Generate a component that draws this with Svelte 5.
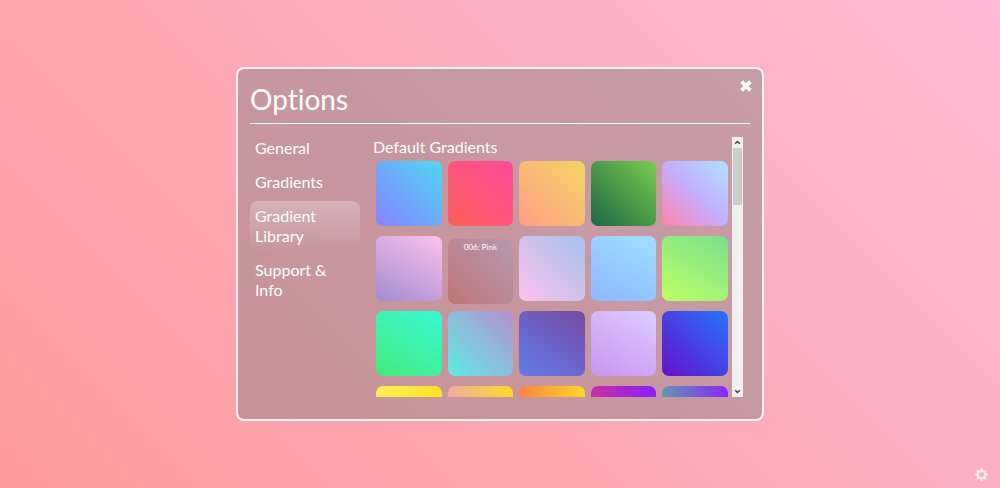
<script>
  const sections = ['General', 'Gradients', 'Gradient Library', 'Support & Info'];
  let active = $state('Gradient Library');
  let open = $state(true);
  let viewport;

  const gradients = [
    { name: 'Blue', css: 'linear-gradient(45deg, #8882ff, #4fd8f2)' },
    { name: 'Red', css: 'linear-gradient(45deg, #ff5f57, #ff4c9f)' },
    { name: 'Sand', css: 'linear-gradient(45deg, #ff9e86, #f4d664)' },
    { name: 'Forest', css: 'linear-gradient(45deg, #1d6844, #7acb4f)' },
    { name: 'Candy', css: 'linear-gradient(45deg, #ff83a8, #c4aeff 50%, #afe3ff)' },
    { name: 'Lavender', css: 'linear-gradient(30deg, #a18cd1, #fbc2eb)' },
    { name: '006: Pink', css: 'linear-gradient(45deg, #be7475, #b59ab3)', hovered: true },
    { name: 'Dawn', css: 'linear-gradient(45deg, #fbc2eb, #a6c1ee)' },
    { name: 'Sky', css: 'linear-gradient(30deg, #8cb6ff, #a1e0ff)' },
    { name: 'Lime', css: 'linear-gradient(30deg, #bdff66, #7ae08c)' },
    { name: 'Mint', css: 'linear-gradient(30deg, #43ea78, #38f9d7)' },
    { name: 'Lagoon', css: 'linear-gradient(45deg, #5eece4, #b58fcf)' },
    { name: 'Indigo', css: 'linear-gradient(35deg, #617cea, #764ba2)' },
    { name: 'Lilac', css: 'linear-gradient(30deg, #c794ef, #dccdff)' },
    { name: 'Ultramarine', css: 'linear-gradient(45deg, #6610cb, #2575fc)' },
    { name: 'Lemon', css: 'linear-gradient(90deg, #fff05a, #ffe125)' },
    { name: 'Peach', css: 'linear-gradient(90deg, #ecae9c, #ffda26)' },
    { name: 'Orange', css: 'linear-gradient(90deg, #ff8346, #ffd724)' },
    { name: 'Magenta', css: 'linear-gradient(90deg, #cb2da3, #8a20fa)' },
    { name: 'Dusk', css: 'linear-gradient(90deg, #6197b0, #8a26fa)' }
  ];
</script>

<main>
  {#if open}
    <section class="panel" aria-labelledby="title">
      <header>
        <h1 id="title">Options</h1>
        <button class="close" aria-label="Close" onclick={() => (open = false)}>
          <svg viewBox="0 0 12 12" width="12" height="12">
            <path d="M3 3 9 9M9 3 3 9" stroke="#fff" stroke-width="3.8" stroke-linecap="square" stroke-linejoin="round" />
          </svg>
        </button>
      </header>
      <div class="body">
        <nav>
          {#each sections as section}
            <button class:active={active === section} onclick={() => (active = section)}>{section}</button>
          {/each}
        </nav>
        <div class="library">
          <div class="view" bind:this={viewport}>
            <h2>Default Gradients</h2>
            <div class="grid">
              {#each gradients as g}
                <button class="tile" class:hovered={g.hovered} aria-label={g.name} style:background={g.css}>
                  {#if g.hovered}{g.name}{/if}
                </button>
              {/each}
            </div>
          </div>
          <div class="bar">
            <button aria-label="Scroll up" onclick={() => viewport.scrollBy(0, -40)}>
              <svg viewBox="0 0 11 11" width="11" height="11"><path d="M3.2 6.8 5.5 4.4 7.8 6.8" /></svg>
            </button>
            <div class="track"><div class="thumb"></div></div>
            <button aria-label="Scroll down" onclick={() => viewport.scrollBy(0, 40)}>
              <svg viewBox="0 0 11 11" width="11" height="11"><path d="M3.2 4.2 5.5 6.6 7.8 4.2" /></svg>
            </button>
          </div>
        </div>
      </div>
    </section>
  {/if}
  <button class="settings" aria-label="Settings" onclick={() => (open = true)}>
    <svg viewBox="-6.5 -6.5 13 13" width="13" height="13">
      <g fill="none" stroke="#fff">
        <circle r="3.7" stroke-width="2.2" />
        <path d="M0-4V-5.2M0 4V5.2M-4 0H-5.2M4 0H5.2M2.9-2.9 3.7-3.7M-2.9 2.9-3.7 3.7M2.9 2.9 3.7 3.7M-2.9-2.9-3.7-3.7" stroke-width="2.4" stroke-linecap="round" />
      </g>
    </svg>
  </button>
</main>

<style>
  :global(body) {
    margin: 0;
  }

  main {
    box-sizing: border-box;
    min-height: 100vh;
    display: flex;
    align-items: center;
    justify-content: center;
    background: linear-gradient(45deg, #ff9a9e, #fdbad3);
    color: #fff;
    font-family: Lato, sans-serif;
    font-variant-ligatures: none;
  }

  button {
    margin: 0;
    padding: 0;
    border: 0;
    background: none;
    color: inherit;
    font: inherit;
    font-variant-ligatures: none;
    cursor: pointer;
  }

  svg {
    display: block;
  }

  .panel {
    box-sizing: border-box;
    width: calc(100% - 32px);
    max-width: 528px;
    padding: 11px 12px 22px;
    border: 2px solid rgba(255, 255, 255, 0.85);
    border-radius: 8px;
    background: rgba(128, 128, 128, 0.43);
    background-clip: padding-box;
  }

  header {
    display: flex;
    align-items: flex-start;
    justify-content: space-between;
    padding-bottom: 5px;
    border-bottom: 1px solid #fff;
  }

  .close {
    margin-right: -2px;
  }

  h1 {
    margin: 0;
    font-size: 28px;
    line-height: 38px;
    font-weight: 400;
  }

  .body {
    display: flex;
    gap: 13px;
    padding-top: 9px;
  }

  nav {
    flex: 0 0 110px;
    display: flex;
    flex-direction: column;
    gap: 4px;
  }

  nav button {
    padding: 5px;
    border-radius: 8px;
    font-size: 16px;
    line-height: 20px;
    text-align: left;
  }

  nav .active {
    background: linear-gradient(rgba(240, 240, 240, 0.32), rgba(240, 240, 240, 0));
  }

  .library {
    flex: 1;
    min-width: 0;
    height: 260px;
    display: flex;
    gap: 4px;
    margin: 4px 7px 0 0;
  }

  .view {
    flex: 1;
    min-width: 0;
    overflow: hidden;
  }

  h2 {
    margin: 0;
    font-size: 16px;
    line-height: 20px;
    font-weight: 400;
  }

  .grid {
    display: grid;
    grid-template-columns: repeat(5, 1fr);
    gap: 10px 6px;
    padding: 4px 0 0 3px;
  }

  .tile {
    height: 65px;
    border-radius: 7px;
  }

  .hovered {
    display: flex;
    justify-content: center;
    padding-top: 2px;
    font-size: 8px;
    line-height: 12px;
    transform: translateY(3px);
  }

  .bar {
    flex: 0 0 11px;
    display: flex;
    flex-direction: column;
    background: #f0f0f0;
  }

  .bar path {
    fill: none;
    stroke: #404040;
    stroke-width: 1.4;
  }

  .track {
    flex: 1;
    padding: 0 1px;
  }

  .thumb {
    height: 24%;
    background: #cdcdcd;
  }

  .settings {
    position: fixed;
    right: 12px;
    bottom: 7px;
    opacity: 0.75;
  }
</style>
